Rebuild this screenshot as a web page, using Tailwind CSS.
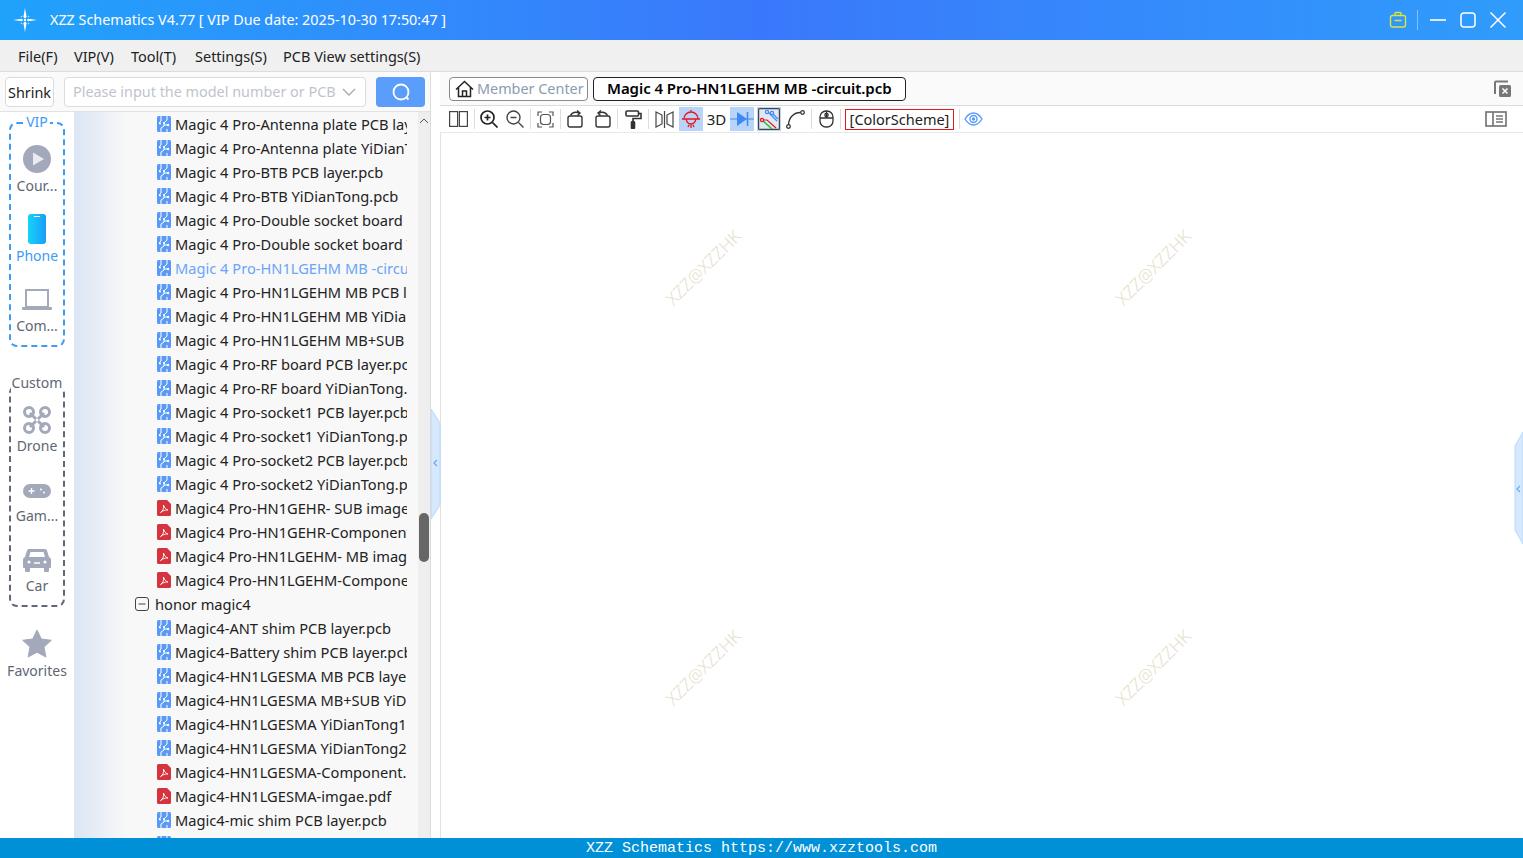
<!DOCTYPE html>
<html lang="en">
<head>
  <meta charset="UTF-8" />
  <title>XZZ Schematics</title>
  <script src="https://cdn.jsdelivr.net/npm/@tailwindcss/browser@4"></script>
</head>
<body class="h-screen overflow-hidden flex flex-col bg-white text-[14.65px] text-[#222] font-['Noto_Sans','Liberation_Sans',sans-serif]">

  <!-- title bar -->
  <header class="h-10 shrink-0 flex items-center bg-gradient-to-r from-[#1fa2fb] via-[#3a78fb] to-[#2f9cfb] text-white">
    <svg class="w-6 h-6 ml-[13px]" viewBox="0 0 24 24" fill="#fff">
      <path d="M12 0 L13.6 9 L12 10.4 L10.4 9 Z M12 24 L13.6 15 L12 13.6 L10.4 15 Z M0 12 L9 10.8 L10 12 L9 13.2 Z M24 12 L15 10.8 L14 12 L15 13.2 Z"/>
      <circle cx="12" cy="12" r="1.2"/><circle cx="8.5" cy="8.5" r=".8" opacity=".7"/><circle cx="15.5" cy="8.5" r=".8" opacity=".7"/><circle cx="8.5" cy="15.5" r=".8" opacity=".7"/><circle cx="15.5" cy="15.5" r=".8" opacity=".7"/>
    </svg>
    <span class="ml-[13px] text-[14.35px]">XZZ Schematics V4.77 [ VIP Due date: 2025-10-30 17:50:47 ]</span>
    <div class="ml-auto flex items-center">
      <svg class="w-[18px] h-[18px]" viewBox="0 0 18 18" fill="none" stroke="#d9e63a" stroke-width="1.4"><rect x="1.500" y="4.500" width="15" height="11.500" rx="2"/><path d="M6 4.500V2.500a1 1 0 0 1 1-1h4a1 1 0 0 1 1 1v2M5.500 9.500h7"/></svg>
      <div class="w-px h-5 bg-white/40 ml-[10px]"></div>
      <svg class="w-[18px] h-[18px] ml-[11px]" viewBox="0 0 18 18" stroke="#fff" stroke-width="1.6"><path d="M1 9h16"/></svg>
      <svg class="w-[18px] h-[18px] ml-[12px]" viewBox="0 0 18 18" fill="none" stroke="#fff" stroke-width="1.5"><rect x="2" y="2" width="14" height="14" rx="3"/></svg>
      <svg class="w-[18px] h-[18px] ml-[12px] mr-4" viewBox="0 0 18 18" stroke="#fff" stroke-width="1.5"><path d="M1.500 1.500l15 15M16.500 1.500l-15 15"/></svg>
    </div>
  </header>

  <!-- menu bar -->
  <nav class="h-[32px] shrink-0 flex items-center pl-[18px] pt-[2px] bg-[#f0f0f0] border-b border-[#dcdcdc] text-[14.5px]">
    <span class="w-[56px]">File(F)</span><span class="w-[57px]">VIP(V)</span><span class="w-[64px]">Tool(T)</span><span class="w-[88px]">Settings(S)</span><span>PCB View settings(S)</span>
  </nav>

  <div class="flex-1 min-h-0 flex">
    <!-- left panel -->
    <aside class="w-[431px] shrink-0 flex flex-col border-r border-[#dcdcdc] bg-[#fafafa]">
      <div class="h-[40px] shrink-0 flex items-center pl-[5px] border-b border-[#e2e2e2] bg-[#fafafa]">
        <button class="w-[49px] h-[30px] pt-[3px] border border-[#dcdcdc] rounded bg-white text-[14.4px] leading-none whitespace-nowrap">Shrink</button>
        <div class="w-[302px] h-[30px] ml-[10px] flex items-center justify-between pl-2 pr-[9px] border border-[#dcdcdc] rounded bg-white text-[#c0c4cc] text-[14.4px]">
          <span class="pt-px whitespace-nowrap">Please input the model number or PCB</span>
          <svg class="w-[14px] h-[14px]" viewBox="0 0 14 14" fill="none" stroke="#a8abb2" stroke-width="1.4"><path d="M1 4l6 6 6-6"/></svg>
        </div>
        <button class="w-[49px] h-[30px] ml-[10px] flex items-center justify-center rounded bg-[#5b9dfb]">
          <svg class="w-5 h-5" viewBox="0 0 20 20" fill="none" stroke="#fff" stroke-width="1.8"><circle cx="10" cy="10" r="7.500"/><path d="M15.500 15.500l2 2"/></svg>
        </button>
      </div>

      <div class="flex-1 min-h-0 flex">
        <!-- category column -->
        <div class="w-[74px] shrink-0 bg-white flex flex-col text-[#606672] text-[14px] pt-[10px]">
          <section class="relative w-[56px] h-[225px] ml-[9px] border-2 border-dashed border-[#3d9bf5] rounded-lg flex flex-col items-center">
            <span class="absolute -top-[11px] px-[2px] bg-white leading-[18px] text-[#3d9bf5]">VIP</span>
            <svg class="w-7 h-7 mt-[21px]" viewBox="0 0 28 28"><circle cx="14" cy="14" r="14" fill="#a3a9ba"/><path d="M10 7.500l11 6.500-11 6.500z" fill="#e9ebf0"/></svg>
            <span class="mt-[3px] leading-5">Cour...</span>
            <svg class="w-[20px] h-[30px] mt-[18px]" viewBox="0 0 20 30"><defs><linearGradient id="ph" x1="0" x2="1"><stop offset="0" stop-color="#15d4f6"/><stop offset="1" stop-color="#1a9cfb"/></linearGradient></defs><rect x="1" width="18" height="30" rx="3" fill="url(#ph)"/><path d="M7 2.500h6" stroke="#fff" stroke-width="1"/></svg>
            <span class="mt-[2px] leading-5 text-[#3d9bf5]">Phone</span>
            <svg class="w-[30px] h-[22px] mt-[23px]" viewBox="0 0 30 22" fill="none"><rect x="4" y="1" width="22" height="17" stroke="#a3a9ba" stroke-width="2"/><rect y="18" width="30" height="3" rx="1" fill="#a3a9ba"/></svg>
            <span class="mt-[5px] leading-5">Com...</span>
          </section>

          <section class="relative w-[56px] h-[222px] ml-[9px] mt-[38px] border-2 border-dashed border-[#5f6778] rounded-lg flex flex-col items-center">
            <span class="absolute -top-[13px] px-px bg-white leading-[18px]">Custom</span>
            <svg class="w-7 h-7 mt-[19px]" viewBox="0 0 28 28" fill="none" stroke="#a3a9ba"><circle cx="6" cy="6" r="4.500" stroke-width="3"/><circle cx="22" cy="6" r="4.500" stroke-width="3"/><circle cx="6" cy="22" r="4.500" stroke-width="3"/><circle cx="22" cy="22" r="4.500" stroke-width="3"/><path d="M7 7l14 14M21 7L7 21" stroke-width="3"/><circle cx="14" cy="14" r="1.500" fill="#fff" stroke="none"/></svg>
            <span class="mt-[2px] leading-5">Drone</span>
            <svg class="w-7 h-[14px] mt-[28px]" viewBox="0 0 28 14"><rect width="28" height="14" rx="7" fill="#a3a9ba"/><path d="M5.500 7h6M8.500 4v6" stroke="#fff" stroke-width="1.300"/><circle cx="18" cy="5.500" r="1" fill="#fff"/><circle cx="21" cy="8.500" r="1" fill="#fff"/></svg>
            <span class="mt-[8px] leading-5">Gam...</span>
            <svg class="w-7 h-[24px] mt-[22px]" viewBox="0 0 28 24" fill="#a3a9ba"><path d="M6 1h16a2 2 0 0 1 2 1.500L26 9a3 3 0 0 1 2 3v7a1 1 0 0 1-1 1h-1v3a1 1 0 0 1-1 1h-3a1 1 0 0 1-1-1v-3H7v3a1 1 0 0 1-1 1H3a1 1 0 0 1-1-1v-3H1a1 1 0 0 1-1-1v-7a3 3 0 0 1 2-3l2-6.500A2 2 0 0 1 6 1z"/><path d="M6 9l1.500-5h13L22 9z" fill="#fff"/><circle cx="6" cy="14" r="1.500" fill="#fff"/><circle cx="22" cy="14" r="1.500" fill="#fff"/><path d="M11 15h6" stroke="#fff" stroke-width="1.500"/></svg>
            <span class="mt-[4px] leading-5">Car</span>
          </section>

          <div class="flex flex-col items-center mt-[23px]">
            <svg class="w-[30px] h-[28px]" viewBox="0 0 30 28" fill="#a3a9ba"><path d="M15 0l4.300 9 10 1.300-7.300 6.800 1.900 9.900L15 22.200 6.100 27 8 17.100.7 10.300l10-1.300z" stroke="#a3a9ba" stroke-linejoin="round"/></svg>
            <span class="mt-[3px] leading-5">Favorites</span>
          </div>
        </div>

        <!-- file tree -->
        <div class="relative flex-1 min-w-0 overflow-hidden bg-gradient-to-r from-[#dbe5f4] via-[#f8f8f8] via-15% to-[#f8f8f8]">
          <ul id="tree" class="w-[345px] h-full overflow-hidden"></ul>
          <div class="absolute right-0 top-0 bottom-0 w-[12px] bg-[#eeeeee]">
            <svg class="absolute top-[5px] left-[1px] w-[10px] h-[8px]" viewBox="0 0 10 8" fill="none" stroke="#555" stroke-width="1"><path d="M1 6l4-4 4 4"/></svg>
            <div class="absolute top-[401px] left-[1px] w-[10px] h-[49px] rounded-full bg-[#666]"></div>
          </div>
        </div>
      </div>
    </aside>

    <!-- right panel -->
    <main class="relative flex-1 min-w-0 flex flex-col ml-[9px] border-l border-[#e2e2e2] bg-white">
      <div class="h-[34px] shrink-0 flex items-center pl-[9px] pr-[11px] -ml-[1px] border-b border-[#dcdcdc] bg-[#fafafa]">
        <div class="w-[139px] h-[24px] flex items-center pl-[5px] border border-[#8a8a8a] rounded bg-white text-[#8c9bb0] text-[14.4px] whitespace-nowrap">
          <svg class="w-[19px] h-[18px] mr-[3px] shrink-0" viewBox="0 0 19 18" fill="none" stroke="#222" stroke-width="1.500"><path d="M1 9.500L9.500 1.500 18 9.500M3.500 7.500V16.500H15.500V7.500M7.500 16.500V11H11.500V16.500"/></svg>
          Member Center
        </div>
        <div class="w-[313px] h-[24px] ml-[5px] flex items-center pl-[13px] border border-[#222] rounded bg-white font-semibold text-[15px] text-black tracking-[-0.05px] whitespace-nowrap">Magic 4 Pro-HN1LGEHM MB -circuit.pcb</div>
        <svg class="ml-auto w-[18px] h-[18px]" viewBox="0 0 18 18" fill="none"><path d="M14 1.500H2a1 1 0 0 0-1 1V14" stroke="#777" stroke-width="2"/><rect x="5" y="5" width="12" height="12" rx="1.500" fill="#777"/><path d="M8.500 8.500l5 5M13.500 8.500l-5 5" stroke="#fff" stroke-width="1.500"/></svg>
      </div>

      <!-- toolbar -->
      <div class="h-[27px] shrink-0 flex items-center -ml-[1px] pl-[9px] border-b border-[#e8e8e8] bg-white text-[15px]">
        <svg class="w-[19px] h-[16px]" viewBox="0 0 19 16" fill="none" stroke="#444" stroke-width="1.200"><rect x=".6" y=".6" width="8" height="14.800"/><rect x="10.400" y=".6" width="8" height="14.800"/></svg>
        <i class="w-px h-5 ml-[6px] mr-[5px] bg-[#dcdcdc]"></i>
        <svg class="w-[18px] h-[18px]" viewBox="0 0 18 18" fill="none" stroke="#222" stroke-width="1.700"><circle cx="7.500" cy="7.500" r="6.500"/><path d="M12.500 12.500l5 5M4.500 7.500h6M7.500 4.500v6" /></svg>
        <svg class="w-[18px] h-[18px] ml-[8px]" viewBox="0 0 18 18" fill="none" stroke="#444" stroke-width="1.400"><circle cx="7.500" cy="7.500" r="6.500"/><path d="M12.500 12.500l5 5M4.500 7.500h6"/></svg>
        <i class="w-px h-5 mx-[6px] bg-[#dcdcdc]"></i>
        <svg class="w-[17px] h-[17px]" viewBox="0 0 17 17" fill="none" stroke="#555" stroke-width="1.200"><path d="M1 5V1h4M12 1h4v4M16 12v4h-4M5 16H1v-4"/><rect x="3.500" y="3.500" width="10" height="10" rx="3"/></svg>
        <i class="w-px h-5 mx-[6px] bg-[#dcdcdc]"></i>
        <svg class="w-[18px] h-[18px]" viewBox="0 0 18 18" fill="none" stroke="#333" stroke-width="1.400"><rect x="1" y="6" width="14" height="11" rx="2"/><path d="M3.500 5.500C5 2.500 8.500 1.500 12.500 3M10 .5L13 3l-2.500 2.500"/></svg>
        <svg class="w-[18px] h-[18px] ml-[8px]" viewBox="0 0 18 18" fill="none" stroke="#333" stroke-width="1.400"><rect x="3" y="6" width="14" height="11" rx="2"/><path d="M14.500 5.500C13 2.500 9.500 1.500 5.500 3M8 .5L5 3l2.500 2.500"/></svg>
        <i class="w-px h-5 mx-[6px] bg-[#dcdcdc]"></i>
        <svg class="w-[17px] h-[19px] ml-px" viewBox="0 0 17 19" fill="none" stroke="#333" stroke-width="1.600"><rect x="1" y="1" width="12.500" height="5" rx="1"/><path d="M13.500 3.500H16v5H8v3"/><rect x="6.500" y="11.500" width="3" height="7" rx="1" fill="#333"/></svg>
        <i class="w-px h-5 mx-[6px] bg-[#dcdcdc]"></i>
        <svg class="w-[19px] h-[17px]" viewBox="0 0 19 17" fill="none" stroke="#444" stroke-width="1.200"><path d="M1 1l6 3v9l-6 3zM18 1l-6 3v9l6 3zM9.500 0v17"/></svg>
        <span class="w-[24px] h-[24px] ml-[5px] flex items-center justify-center bg-[#b8d4f8]">
          <svg class="w-[20px] h-[20px]" viewBox="0 0 20 20" fill="none" stroke="#e8161c" stroke-width="1.300"><path d="M3 10a7 7 0 0 1 14 0zM1 10h18M10 1v2M5 10c1 4 3 5 5 5s4-1 5-5M8 16l-1 2M12 16l1 2M10 16v3"/></svg>
        </span>
        <span class="w-[27px] text-center text-[#222]">3D</span>
        <span class="w-[24px] h-[24px] flex items-center justify-center bg-[#b8d4f8]">
          <svg class="w-[24px] h-[16px]" viewBox="0 0 24 16"><path d="M0 8h24" stroke="#3d8af5"/><path d="M7 1l10 7-10 7z" fill="#3d8af5"/><path d="M17.500 1v14" stroke="#3d8af5" stroke-width="1.500"/></svg>
        </span>
        <span class="w-[24px] h-[24px] ml-[3px] flex items-center justify-center bg-[#b8d4f8]">
          <svg class="w-[22px] h-[22px]" viewBox="0 0 22 22" fill="#dfe8f5" stroke-width="1.200"><rect x=".6" y=".6" width="20.800" height="20.800" rx="1" stroke="#444"/><path d="M4 12l10 9" stroke="#1fc12e" fill="none" stroke-width="1.500"/><path d="M4 12h5l9 8" stroke="#e8161c" fill="none"/><circle cx="4" cy="12" r="1.600" stroke="#e8161c"/><path d="M10 4l9 9" stroke="#3d8af5" fill="none"/><circle cx="9" cy="4" r="1.600" stroke="#3d8af5"/><circle cx="14" cy="5" r="1.600" stroke="#3d8af5"/><path d="M15 6l5 5" stroke="#3d8af5" fill="none"/></svg>
        </span>
        <svg class="w-[19px] h-[19px] ml-[5px]" viewBox="0 0 19 19" fill="none" stroke="#333" stroke-width="1.300"><circle cx="2.500" cy="16.500" r="1.800"/><circle cx="16.500" cy="2.500" r="1.800"/><path d="M2.500 14.500C3 7 8 2.500 14.500 2.500"/></svg>
        <i class="w-px h-5 mx-[6px] bg-[#dcdcdc]"></i>
        <svg class="w-[15px] h-[18px] ml-[1px]" viewBox="0 0 15 18" fill="none" stroke="#333" stroke-width="1.300"><rect x="1" y="1" width="13" height="16" rx="6"/><path d="M1 8h13M7.500 1v7"/><rect x="6" y="3.500" width="3" height="3" rx="1"/></svg>
        <i class="w-px h-5 mx-[6px] bg-[#dcdcdc]"></i>
        <span class="w-[109px] h-[21px] -ml-[2px] pt-px flex items-center justify-center border border-[#e8161c] text-[14.5px] text-[#222]">[ColorScheme]</span>
        <i class="w-px h-5 ml-[5px] mr-[4px] bg-[#dcdcdc]"></i>
        <svg class="w-[19px] h-[14px]" viewBox="0 0 19 14" fill="none" stroke="#5b9dfb" stroke-width="1.400"><path d="M1 7c2.500-4 5.500-6 8.500-6s6 2 8.500 6c-2.500 4-5.500 6-8.500 6S3.500 11 1 7z"/><circle cx="9.500" cy="7" r="3.500"/><circle cx="9.500" cy="7" r="1" fill="#5b9dfb"/></svg>
        <svg class="ml-auto mr-[16px] w-[22px] h-[16px]" viewBox="0 0 22 16" fill="none" stroke="#777" stroke-width="1.700"><rect x="1" y="1" width="20" height="14"/><path d="M8 1v14" /><path d="M11 5h7M11 8h7M11 11h7" stroke-width="1.300"/></svg>
      </div>

      <!-- canvas with watermarks -->
      <div class="relative flex-1 min-h-0 overflow-hidden bg-white">
        <span class="absolute left-[262px] top-[134px] -translate-x-1/2 -translate-y-1/2 -rotate-45 text-[17.4px] font-light text-[#e6e0cc] whitespace-nowrap">XZZ@XZZHK</span>
        <span class="absolute left-[712px] top-[134px] -translate-x-1/2 -translate-y-1/2 -rotate-45 text-[17.4px] font-light text-[#e6e0cc] whitespace-nowrap">XZZ@XZZHK</span>
        <span class="absolute left-[262px] top-[534px] -translate-x-1/2 -translate-y-1/2 -rotate-45 text-[17.4px] font-light text-[#e6e0cc] whitespace-nowrap">XZZ@XZZHK</span>
        <span class="absolute left-[712px] top-[534px] -translate-x-1/2 -translate-y-1/2 -rotate-45 text-[17.4px] font-light text-[#e6e0cc] whitespace-nowrap">XZZ@XZZHK</span>
      </div>

      <!-- collapse handles -->
      <svg class="absolute -left-[10px] top-[337px] w-[10px] h-[110px]" viewBox="0 0 10 110"><path d="M0 0L9 14V96L0 110z" fill="#d5e8fd" stroke="#b5d8fb"/><path d="M6 51l-3 3 3 3" fill="none" stroke="#6aaaf0" stroke-width="1.200"/></svg>
      <svg class="absolute right-0 top-[360px] w-[9px] h-[112px]" viewBox="0 0 9 112"><path d="M9 0L1 14V98L9 112z" fill="#d5e8fd" stroke="#b5d8fb"/><path d="M6 54l-3 3 3 3" fill="none" stroke="#6aaaf0" stroke-width="1.200"/></svg>
    </main>
  </div>

  <!-- status bar -->
  <footer class="h-5 shrink-0 flex items-center justify-center pt-[3px] bg-[#0090d8] text-white text-[15px] font-['Liberation_Mono',monospace]">XZZ Schematics https://www.xzztools.com</footer>

  <script>
    const pcbIcon = `<svg class="w-[14px] h-[16px] shrink-0" viewBox="0 0 14 16"><rect width="14" height="16" rx="1.500" fill="#5a9af6"/><path d="M4 0v5L2 7M10 0v4L7 7v3l-3 2v4M7 9h3M10 16v-3" fill="none" stroke="#fff" stroke-width="1"/><circle cx="11" cy="9" r="1.200" fill="#fff"/><circle cx="7" cy="7" r="1" fill="#fff"/><circle cx="3" cy="7.500" r="1" fill="#fff"/></svg>`;
    const pdfIcon = `<svg class="w-[14px] h-[16px] shrink-0" viewBox="0 0 14 16"><path d="M1.500 0H10l4 4v10.500a1.500 1.500 0 0 1-1.500 1.500h-11A1.500 1.500 0 0 1 0 14.500v-13A1.500 1.500 0 0 1 1.500 0z" fill="#d5343f"/><path d="M3.500 12.500C6 11 7 8 6.500 5c1 3 2.500 4.500 4.500 5-2.500-.2-5 .5-7.500 2.500z" fill="none" stroke="#fff" stroke-width=".9"/></svg>`;

    const rows = [
      ["pcb", "Magic 4 Pro-Antenna plate PCB layer.pcb"],
      ["pcb", "Magic 4 Pro-Antenna plate YiDianTong.pcb"],
      ["pcb", "Magic 4 Pro-BTB PCB layer.pcb"],
      ["pcb", "Magic 4 Pro-BTB YiDianTong.pcb"],
      ["pcb", "Magic 4 Pro-Double socket board PCB layer.pcb"],
      ["pcb", "Magic 4 Pro-Double socket board YiDianTong.pcb"],
      ["sel", "Magic 4 Pro-HN1LGEHM MB -circuit.pcb"],
      ["pcb", "Magic 4 Pro-HN1LGEHM MB PCB layer.pcb"],
      ["pcb", "Magic 4 Pro-HN1LGEHM MB YiDianTong.pcb"],
      ["pcb", "Magic 4 Pro-HN1LGEHM MB+SUB YiDianTong.pcb"],
      ["pcb", "Magic 4 Pro-RF board PCB layer.pcb"],
      ["pcb", "Magic 4 Pro-RF board YiDianTong.pcb"],
      ["pcb", "Magic 4 Pro-socket1 PCB layer.pcb"],
      ["pcb", "Magic 4 Pro-socket1 YiDianTong.pcb"],
      ["pcb", "Magic 4 Pro-socket2 PCB layer.pcb"],
      ["pcb", "Magic 4 Pro-socket2 YiDianTong.pcb"],
      ["pdf", "Magic4 Pro-HN1GEHR- SUB image.pdf"],
      ["pdf", "Magic4 Pro-HN1GEHR-Component.pdf"],
      ["pdf", "Magic4 Pro-HN1LGEHM- MB image.pdf"],
      ["pdf", "Magic4 Pro-HN1LGEHM-Component.pdf"],
      ["dir", "honor magic4"],
      ["pcb", "Magic4-ANT shim PCB layer.pcb"],
      ["pcb", "Magic4-Battery shim PCB layer.pcb"],
      ["pcb", "Magic4-HN1LGESMA MB PCB layer.pcb"],
      ["pcb", "Magic4-HN1LGESMA MB+SUB YiDianTong.pcb"],
      ["pcb", "Magic4-HN1LGESMA YiDianTong1.pcb"],
      ["pcb", "Magic4-HN1LGESMA YiDianTong2.pcb"],
      ["pdf", "Magic4-HN1LGESMA-Component.pdf"],
      ["pdf", "Magic4-HN1LGESMA-imgae.pdf"],
      ["pcb", "Magic4-mic shim PCB layer.pcb"],
      ["pcb", "Magic4-SUB PCB layer.pcb"],
    ];

    document.getElementById("tree").innerHTML = rows.map(([type, name]) => {
      if (type === "dir") {
        return `<li class="h-6 flex items-center pl-[61px]">
          <svg class="w-[14px] h-[14px] shrink-0" viewBox="0 0 14 14" fill="none" stroke="#444"><rect x=".5" y=".5" width="13" height="13" rx="2.500"/><path d="M3.500 7h7"/></svg>
          <span class="ml-[6px] pt-[2px] whitespace-nowrap">${name}</span>
        </li>`;
      }
      const icon = type === "pdf" ? pdfIcon : pcbIcon;
      const color = type === "sel" ? "text-[#6aa5f7]" : "text-[#222]";
      return `<li class="h-6 flex items-center pl-[83px]">${icon}
        <span class="ml-1 pt-[2px] w-[232px] overflow-hidden whitespace-nowrap ${color}">${name}</span>
      </li>`;
    }).join("");
  </script>
</body>
</html>
